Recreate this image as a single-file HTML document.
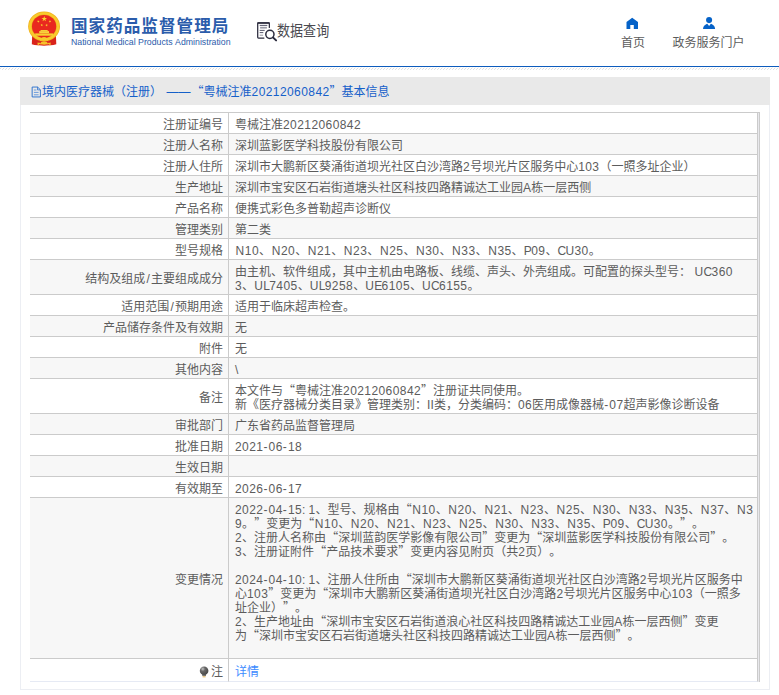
<!DOCTYPE html>
<html lang="zh-CN">
<head>
<meta charset="utf-8">
<title>国家药品监督管理局 数据查询</title>
<style>
*{box-sizing:border-box;margin:0;padding:0}
html,body{width:779px;height:695px;overflow:hidden;background:#fff}
body{text-spacing-trim:space-all;font-kerning:none;font-family:"Liberation Sans","Noto Sans CJK SC",sans-serif;font-size:12px;color:#5c5c5c;position:relative}
.q{font-family:"Noto Sans CJK SC",sans-serif;line-height:0}
.ls0{letter-spacing:0.00px}
.ls10{letter-spacing:0.10px}
.ls116{letter-spacing:1.16px}
.ls20{letter-spacing:0.20px}
.ls33{letter-spacing:0.33px}
.ls35{letter-spacing:0.35px}
.ls42{letter-spacing:0.42px}
.lsm38{letter-spacing:-0.38px}
.lsm50{letter-spacing:-0.50px}
.lsm60{letter-spacing:-0.60px}
.lsm67{letter-spacing:-0.67px}
.sy120{margin:0 0.60px}
.sy230{margin:0 1.15px}
.hdr{position:absolute;left:0;top:0;width:779px;height:65px;background:#fff}
.blue{position:absolute;left:0;top:66px;width:779px;height:1px;background:#0d5cbd}
.hatch{position:absolute;left:0;top:67px;width:779px;height:4px;
 background:
 repeating-linear-gradient(90deg,#f4f4f4 0,#f4f4f4 1px,#fff 1px,#fff 3px) 1px 0/100% 1px no-repeat,
 repeating-linear-gradient(90deg,#dedede 0,#dedede 1px,#fff 1px,#fff 3px) 0 1px/100% 1px no-repeat,
 repeating-linear-gradient(90deg,#fff 0,#fff 2px,#e2e2e2 2px,#e2e2e2 3px) 0 2px/100% 1px no-repeat,
 #fff}
.emblem{position:absolute;left:26px;top:8px}
.t1{position:absolute;left:71px;top:15px;font-size:16.6px;line-height:24px;font-weight:bold;color:#2b5cab;white-space:nowrap;letter-spacing:1px}
.t2{position:absolute;left:71px;top:37px;font-size:8.75px;line-height:10px;color:#2b5cab;white-space:nowrap}
.qicon{position:absolute;left:255px;top:19px}
.qtxt{position:absolute;left:277px;top:19.5px;font-size:14.6px;line-height:22px;color:#4a4a50;white-space:nowrap;transform-origin:0 50%;transform:scaleX(.895)}
.ic{position:absolute}
.nav{position:absolute;top:36px;text-align:center;font-size:12px;line-height:14px;color:#5c5c5c;white-space:nowrap}
.panel{position:absolute;left:20px;top:77px;width:750px;height:613px;border:1px solid #eceef3;border-top:0;background:#fff}
.ph{position:absolute;left:-1px;top:0;width:750px;height:28px;background:#e9e9e9;color:#1560c9;font-size:12px;line-height:14px;padding:8px 0 0 22px;white-space:nowrap}
.dc{position:absolute;left:11px;top:8.5px}
table{position:absolute;left:9px;top:35px;width:728px;border-collapse:separate;border-spacing:0;border-top:1px solid #cbcbcb;table-layout:fixed}
.rb{position:absolute;left:737px;top:35px;width:2px;height:570px;background:#e8e8ec;border-right:1px solid #cbcbcb;border-top:1px solid #cbcbcb}
td{border-bottom:1px solid #cbcbcb;border-right:1px solid #cbcbcb;font-size:12px;line-height:14px;padding:5px 6px 1px 6px;vertical-align:top;color:#5c5c5c;background:#fff}
tr:nth-child(even) td{background:#f7f7f7}
td.l{width:199px;text-align:right;padding-right:5px;white-space:nowrap;vertical-align:middle}
td.v{width:529px;white-space:nowrap}
tr.last td{border-bottom-color:#e6eaf4;height:23px}
tr.last td.v{padding-top:6px}
.bulb{display:inline-block;vertical-align:-2px;margin-right:2px}
a{color:#3d8bff;text-decoration:none}
</style>
</head>
<body>
<div class="hdr">
  <svg class="emblem" width="38" height="40" viewBox="26 8 38 40">
<path d="M32.2 35.5 L31.8 44.2 Q35 45.6 38.8 45.3 L40.5 40 Z" fill="#d9231b"/>
<path d="M55.9 35.5 L56.3 44.2 Q53 45.6 49.3 45.3 L47.6 40 Z" fill="#d9231b"/>
<path d="M38.6 45.3 Q44 46.2 49.5 45.3 L48.5 41 L39.6 41 Z" fill="#e02a1c"/>
<ellipse cx="44.07" cy="26.4" rx="15.9" ry="14.9" fill="#f1b01d"/>
<ellipse cx="44.07" cy="26.4" rx="15.2" ry="14.2" fill="#f8cb2c"/>
<ellipse cx="44.07" cy="26.4" rx="12.6" ry="11.9" fill="#eea81c"/>
<ellipse cx="44.07" cy="26.4" rx="12.1" ry="11.4" fill="#e9281f"/>
<polygon points="44.25,16.00 44.93,17.96 47.01,18.00 45.35,19.26 45.95,21.25 44.25,20.06 42.55,21.25 43.15,19.26 41.49,18.00 43.57,17.96" fill="#fbd62e"/>
<polygon points="38.97,20.33 38.79,21.28 39.62,21.78 38.66,21.90 38.44,22.84 38.03,21.97 37.07,22.05 37.77,21.39 37.40,20.50 38.24,20.96" fill="#fbd62e"/>
<polygon points="49.33,20.33 50.06,20.96 50.90,20.50 50.53,21.39 51.23,22.05 50.27,21.97 49.86,22.84 49.64,21.90 48.68,21.78 49.51,21.28" fill="#fbd62e"/>
<polygon points="42.03,23.77 42.19,24.72 43.14,24.91 42.28,25.35 42.39,26.31 41.71,25.63 40.83,26.04 41.27,25.18 40.61,24.47 41.56,24.61" fill="#fbd62e"/>
<polygon points="46.37,23.87 46.84,24.71 47.79,24.57 47.13,25.28 47.57,26.14 46.69,25.73 46.01,26.41 46.12,25.45 45.26,25.01 46.21,24.82" fill="#fbd62e"/>
<path d="M40.2 30.9 L40.9 29.9 L47.3 29.9 L48 30.9 Z" fill="#f7cf3a"/>
<rect x="39.2" y="31.1" width="9.8" height="2.1" fill="#f8d23c"/>
<rect x="35.2" y="33.4" width="17.8" height="2.3" fill="#f9d02f"/>
<path d="M37 38.2 Q44 42.3 51.2 38.2 L50.3 37.3 Q44 40.8 37.9 37.3 Z" fill="#f8cb2c"/>
<ellipse cx="44.1" cy="38.6" rx="2.6" ry="1.5" fill="#f8cb2c"/>
<ellipse cx="44.1" cy="43.0" rx="3.3" ry="1.7" fill="#f6c22a"/>
<path d="M37.5 42.4 L42 43.6 L41.5 44.6 L39 44 L38.6 45.4 L37.7 45.3 Z" fill="#f6c22a"/>
<path d="M50.7 42.4 L46.2 43.6 L46.7 44.6 L49.2 44 L49.6 45.4 L50.5 45.3 Z" fill="#f6c22a"/>
</svg>
  <div class="t1">国家药品监督管理局</div>
  <div class="t2">National Medical Products Administration</div>
  <svg class="qicon" width="24" height="24" viewBox="255 19 24 24" fill="none" stroke-linecap="round">
<path d="M269.35 27.4 V23.6 Q269.35 22.8 268.55 22.8 H258.5 Q257.7 22.8 257.7 23.6 V37.3 Q257.7 38.1 258.5 38.1 H263.9" stroke="#2b2b3d" stroke-width="1.25"/>
<path d="M258 22.9 H269" stroke="#2b2b3d" stroke-width="1.5"/>
<path d="M260.1 25.4 H266.9" stroke="#44445a" stroke-width="0.9"/>
<path d="M260.1 27.7 H266.9" stroke="#9a9aa6" stroke-width="1.7" stroke-linecap="butt"/>
<path d="M260.1 30.4 H264.3" stroke="#44445a" stroke-width="0.9"/>
<path d="M260.1 32.6 H262.9" stroke="#44445a" stroke-width="0.9"/>
<path d="M260.1 35.2 H262.7" stroke="#8a8a98" stroke-width="0.9"/>
<circle cx="269.9" cy="34.35" r="4.1" stroke="#2b2b3d" stroke-width="1.5"/>
<path d="M273.2 37.6 L276.1 40.4" stroke="#2b2b3d" stroke-width="2"/>
</svg>
  <div class="qtxt">数据查询</div>
  <svg class="ic" style="left:625px;top:16px" width="15" height="14" viewBox="625 16 15 14"><path d="M632.2 17.8 L638 22.1 V28.9 H633.8 V24.9 H630.3 V28.9 H626.5 V22.1 Z" fill="#0562c8"/></svg>
  <svg class="ic" style="left:701px;top:15px" width="16" height="15" viewBox="701 15 16 15"><circle cx="709.1" cy="20.1" r="3.05" fill="#0562c8"/><path d="M703 29.05 Q703.1 25.4 706.6 23.9 L707.3 23.85 L709.1 26 L710.9 23.85 L711.6 23.9 Q715 25.4 715.1 29.05 Z" fill="#0562c8"/></svg>
  <div class="nav" style="left:608px;width:50px">首页</div>
  <div class="nav" style="left:668px;width:81px">政务服务门户</div>
</div>
<div class="blue"></div>
<div class="hatch"></div>
<div class="panel">
  <div class="ph"><svg class="dc" width="11" height="12" viewBox="31 85.5 11 12" fill="none" stroke="#1763cb"><path d="M32.15 86.55 H37.6 L40.4 89.3 V96.45 H32.15 Z" stroke-width="0.85"/><path d="M37.5 86.6 V89.4 H40.3" stroke-width="0.7"/><path d="M33.9 89.5 H36.4 M33.9 91.9 H38.6 M33.9 94.3 H38.6" stroke-width="0.8" stroke="#4a86d8"/></svg>境内医疗器械（注册）<span style="margin:0 1px 0 4.5px">——</span><span class="q">“</span>粤械注准<span class="ls42">20212060842</span><span class="q">”</span>基本信息</div>
  <table>
    <tr><td class="l">注册证编号</td><td class="v">粤械注准<span class="ls42">20212060842</span></td></tr>
    <tr><td class="l">注册人名称</td><td class="v">深圳蓝影医学科技股份有限公司</td></tr>
    <tr><td class="l">注册人住所</td><td class="v">深圳市大鹏新区葵涌街道坝光社区白沙湾路<span class="ls42">2</span>号坝光片区服务中心<span class="ls42">103</span>（一照多址企业）</td></tr>
    <tr><td class="l">生产地址</td><td class="v">深圳市宝安区石岩街道塘头社区科技四路精诚达工业园<span class="ls33">A</span>栋一层西侧</td></tr>
    <tr><td class="l">产品名称</td><td class="v">便携式彩色多普勒超声诊断仪</td></tr>
    <tr><td class="l">管理类别</td><td class="v">第二类</td></tr>
    <tr><td class="l">型号规格</td><td class="v"><span class="sy120">N</span><span class="ls42">10</span>、<span class="sy120">N</span><span class="ls42">20</span>、<span class="sy120">N</span><span class="ls42">21</span>、<span class="sy120">N</span><span class="ls42">23</span>、<span class="sy120">N</span><span class="ls42">25</span>、<span class="sy120">N</span><span class="ls42">30</span>、<span class="sy120">N</span><span class="ls42">33</span>、<span class="sy120">N</span><span class="ls42">35</span>、<span class="lsm38">P</span><span class="ls42">09</span>、<span class="lsm67">C</span><span class="ls35">U</span><span class="ls42">30</span>。</td></tr>
    <tr><td class="l">结构及组成<span class="sy230">/</span>主要组成成分</td><td class="v">由主机、软件组成，其中主机由电路板、线缆、声头、外壳组成。可配置的探头型号：<span class="ls20"> </span><span class="ls35">U</span><span class="lsm67">C</span><span class="ls42">360</span><br><span class="ls42">3</span>、<span class="ls35">U</span><span class="lsm60">L</span><span class="ls42">7405</span>、<span class="ls35">U</span><span class="lsm60">L</span><span class="ls42">9258</span>、<span class="ls35">U</span><span class="lsm60">E</span><span class="ls42">6105</span>、<span class="ls35">U</span><span class="lsm67">C</span><span class="ls42">6155</span>。</td></tr>
    <tr><td class="l">适用范围<span class="sy230">/</span>预期用途</td><td class="v">适用于临床超声检查。</td></tr>
    <tr><td class="l">产品储存条件及有效期</td><td class="v">无</td></tr>
    <tr><td class="l">附件</td><td class="v">无</td></tr>
    <tr><td class="l">其他内容</td><td class="v"><span class="ls0">\</span></td></tr>
    <tr><td class="l">备注</td><td class="v">本文件与<span class="q">“</span>粤械注准<span class="ls42">20212060842</span><span class="q">”</span>注册证共同使用。<br>新《医疗器械分类目录》管理类别：<span class="ls10">II</span>类，分类编码：<span class="ls42">06</span>医用成像器械<span class="ls116">-</span><span class="ls42">07</span>超声影像诊断设备</td></tr>
    <tr><td class="l">审批部门</td><td class="v">广东省药品监督管理局</td></tr>
    <tr><td class="l">批准日期</td><td class="v"><span class="ls42">2021</span><span class="ls116">-</span><span class="ls42">06</span><span class="ls116">-</span><span class="ls42">18</span></td></tr>
    <tr><td class="l">生效日期</td><td class="v">&nbsp;</td></tr>
    <tr><td class="l">有效期至</td><td class="v"><span class="ls42">2026</span><span class="ls116">-</span><span class="ls42">06</span><span class="ls116">-</span><span class="ls42">17</span></td></tr>
    <tr><td class="l">变更情况</td><td class="v"><span class="ls42">2022</span><span class="ls116">-</span><span class="ls42">04</span><span class="ls116">-</span><span class="ls42">15</span><span class="lsm50">:</span><span class="ls20"> </span><span class="ls42">1</span>、型号、规格由<span class="q">“</span><span class="sy120">N</span><span class="ls42">10</span>、<span class="sy120">N</span><span class="ls42">20</span>、<span class="sy120">N</span><span class="ls42">21</span>、<span class="sy120">N</span><span class="ls42">23</span>、<span class="sy120">N</span><span class="ls42">25</span>、<span class="sy120">N</span><span class="ls42">30</span>、<span class="sy120">N</span><span class="ls42">33</span>、<span class="sy120">N</span><span class="ls42">35</span>、<span class="sy120">N</span><span class="ls42">37</span>、<span class="sy120">N</span><span class="ls42">3</span><br><span class="ls42">9</span>。<span class="q">”</span>变更为<span class="q">“</span><span class="sy120">N</span><span class="ls42">10</span>、<span class="sy120">N</span><span class="ls42">20</span>、<span class="sy120">N</span><span class="ls42">21</span>、<span class="sy120">N</span><span class="ls42">23</span>、<span class="sy120">N</span><span class="ls42">25</span>、<span class="sy120">N</span><span class="ls42">30</span>、<span class="sy120">N</span><span class="ls42">33</span>、<span class="sy120">N</span><span class="ls42">35</span>、<span class="lsm38">P</span><span class="ls42">09</span>、<span class="lsm67">C</span><span class="ls35">U</span><span class="ls42">30</span>。<span class="q">”</span>。<br><span class="ls42">2</span>、注册人名称由<span class="q">“</span>深圳蓝韵医学影像有限公司<span class="q">”</span>变更为<span class="q">“</span>深圳蓝影医学科技股份有限公司<span class="q">”</span>。<br><span class="ls42">3</span>、注册证附件<span class="q">“</span>产品技术要求<span class="q">”</span>变更内容见附页（共<span class="ls42">2</span>页）。<br><br><span class="ls42">2024</span><span class="ls116">-</span><span class="ls42">04</span><span class="ls116">-</span><span class="ls42">10</span><span class="lsm50">:</span><span class="ls20"> </span><span class="ls42">1</span>、注册人住所由<span class="q">“</span>深圳市大鹏新区葵涌街道坝光社区白沙湾路<span class="ls42">2</span>号坝光片区服务中<br>心<span class="ls42">103</span><span class="q">”</span>变更为<span class="q">“</span>深圳市大鹏新区葵涌街道坝光社区白沙湾路<span class="ls42">2</span>号坝光片区服务中心<span class="ls42">103</span>（一照多<br>址企业）<span class="q">”</span>。<br><span class="ls42">2</span>、生产地址由<span class="q">“</span>深圳市宝安区石岩街道浪心社区科技四路精诚达工业园<span class="ls33">A</span>栋一层西侧<span class="q">”</span>变更<br>为<span class="q">“</span>深圳市宝安区石岩街道塘头社区科技四路精诚达工业园<span class="ls33">A</span>栋一层西侧<span class="q">”</span>。<br>&nbsp;</td></tr>
    <tr class="last"><td class="l"><svg class="bulb" width="10" height="12" viewBox="199 664.5 10 12"><defs><radialGradient id="bg" cx="0.35" cy="0.3" r="0.75"><stop offset="0" stop-color="#c8c8c8"/><stop offset="0.35" stop-color="#6a6a6a"/><stop offset="1" stop-color="#444"/></radialGradient></defs><circle cx="204.1" cy="669.2" r="4.3" fill="url(#bg)"/><path d="M202.2 672.6 H206 V674.3 H202.2 Z" fill="#555"/><path d="M202.6 675.3 H205.6" stroke="#d9a441" stroke-width="0.9"/></svg>注</td><td class="v"><a>详情</a></td></tr>
  </table>
  <div class="rb"></div>
</div>
</body>
</html>
